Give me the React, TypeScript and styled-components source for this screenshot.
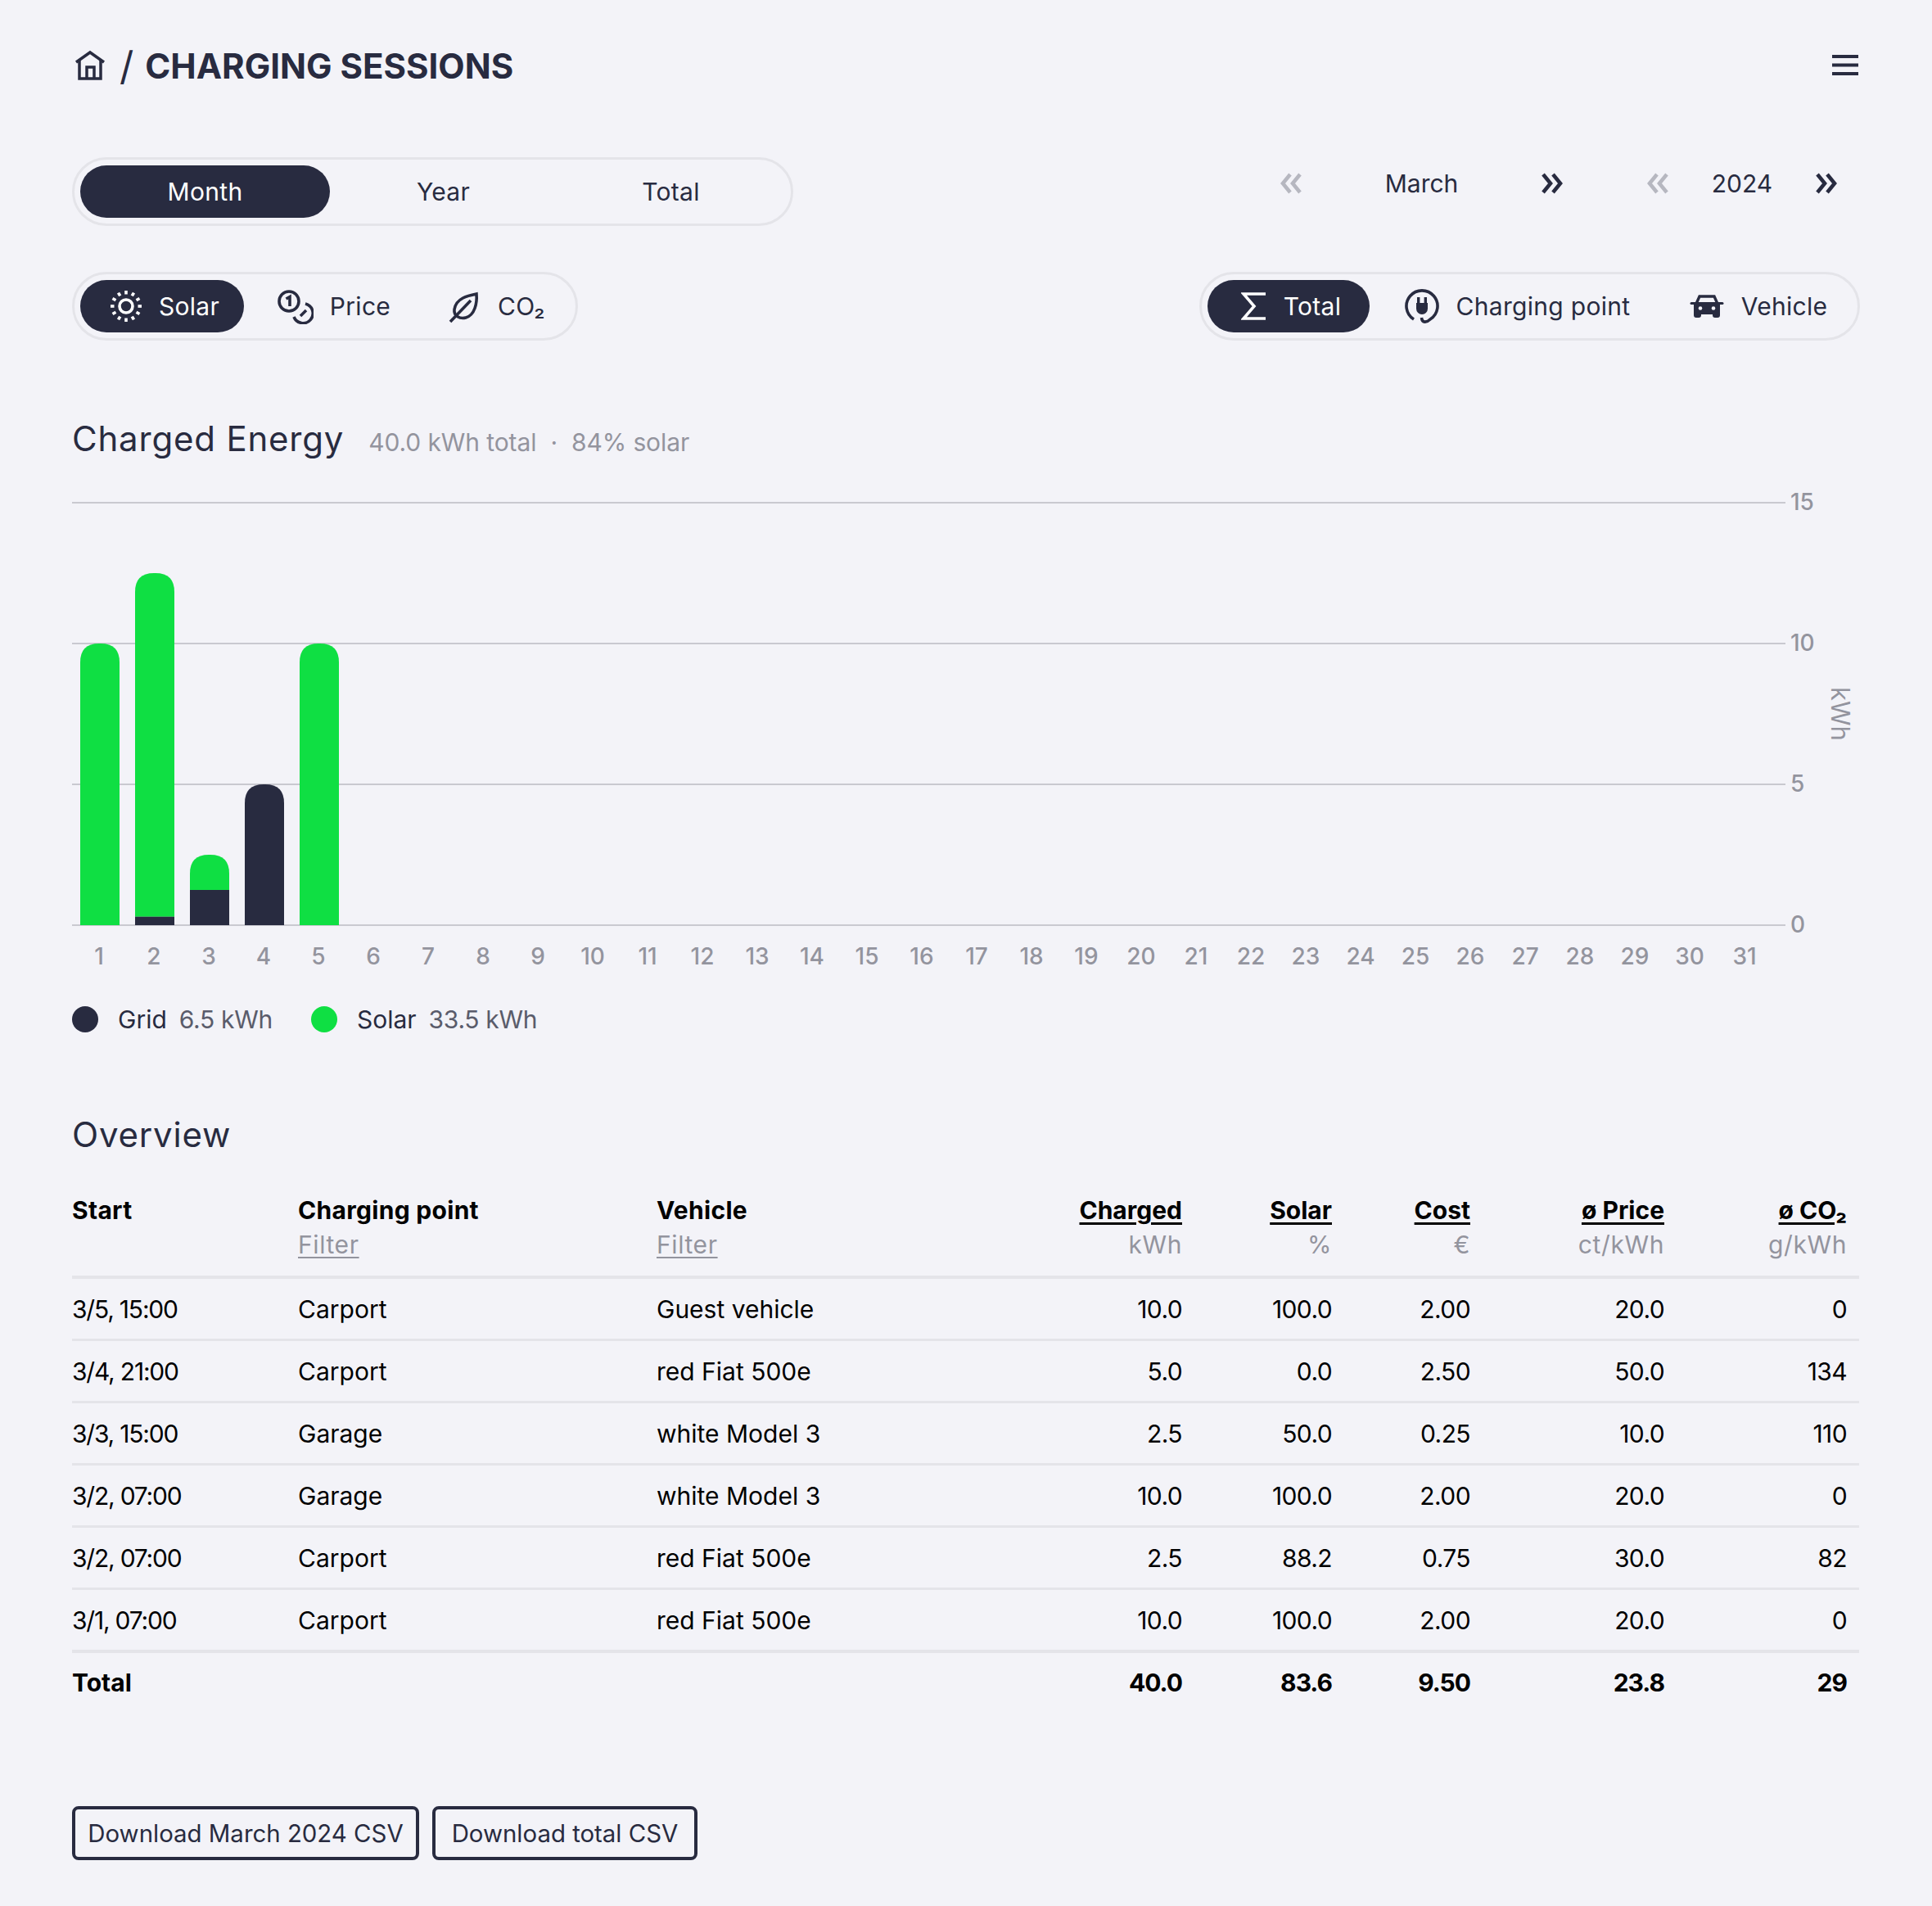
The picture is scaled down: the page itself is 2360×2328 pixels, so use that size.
import React from 'react';
import styled, { createGlobalStyle } from 'styled-components';

const DARK = '#282b40';
const GREEN = '#0fdf43';
const GRAY = '#93949e';
const LINE = '#e4e4e9';
const BG = '#f3f3f8';

const GlobalStyle = createGlobalStyle`
    html, body {
        margin: 0;
        padding: 0;
        background: ${BG};
    }
    body {
        font-family: Inter, "Liberation Sans", sans-serif;
        color: ${DARK};
    }
`

const Page = styled.div`
    width: 2360px;
    height: 2328px;
    box-sizing: border-box;
    padding: 0 88px;
    overflow: hidden;
`

const Header = styled.header`
    height: 160px;
    display: flex;
    align-items: center;
    justify-content: space-between;
`

const Crumbs = styled.div`
    display: flex;
    align-items: center;
`

const Slash = styled.span`
    font-size: 48px;
    font-weight: 400;
    margin: 0 14px 0 16px;
`

const Title = styled.h1`
    margin: 0;
    font-size: 42px;
    font-weight: 700;
    white-space: nowrap;
`

const Row = styled.div<{ $top: number }>`
    display: flex;
    justify-content: space-between;
    align-items: flex-start;
    margin-top: ${(p) => p.$top}px;
`

const Pill = styled.div`
    display: flex;
    box-sizing: border-box;
    height: 84px;
    padding: 7px;
    border: 3px solid ${LINE};
    border-radius: 42px;
`

const Segment = styled.div<{ $width: number; $active?: boolean; $inset?: number }>`
    display: flex;
    align-items: center;
    justify-content: center;
    gap: 20px;
    box-sizing: border-box;
    width: ${(p) => p.$width}px;
    height: 64px;
    padding-left: ${(p) => p.$inset ?? 0}px;
    border-radius: 32px;
    font-size: 30px;
    letter-spacing: 0.3px;
    background: ${(p) => (p.$active ? DARK : 'transparent')};
    color: ${(p) => (p.$active ? '#fff' : DARK)};
    white-space: nowrap;
`

const DateNav = styled.div`
    display: flex;
    align-items: center;
    height: 64px;
    padding-right: 11px;
`

const NavGroup = styled.div`
    display: flex;
    align-items: center;
    & + & {
        margin-left: 69px;
    }
`

const NavArrow = styled.div<{ $disabled?: boolean }>`
    display: flex;
    justify-content: center;
    width: 60px;
    color: ${(p) => (p.$disabled ? '#b6b7c0' : DARK)};
`

const NavLabel = styled.div<{ $width: number }>`
    width: ${(p) => p.$width}px;
    text-align: center;
    font-size: 30px;
`

const ChartHead = styled.div`
    display: flex;
    align-items: baseline;
    gap: 30px;
    height: 50px;
    margin-top: 95px;
`

const Heading = styled.h2`
    margin: 0;
    font-size: 42px;
    line-height: 50px;
    font-weight: 400;
    letter-spacing: 0.8px;
`

const ChartMeta = styled.span`
    display: flex;
    gap: 17px;
    font-size: 30px;
    letter-spacing: -0.1px;
    color: ${GRAY};
`

const ChartFrame = styled.svg`
    display: block;
    margin-top: 33px;
    text {
        font-family: Inter, "Liberation Sans", sans-serif;
        font-size: 28px;
        font-weight: 500;
        fill: ${GRAY};
    }
    text.unit {
        font-size: 31px;
        font-weight: 400;
    }
`

const Legend = styled.div`
    display: flex;
    align-items: center;
    gap: 47px;
    height: 40px;
    margin-top: 35px;
    font-size: 30px;
`

const LegendItem = styled.div`
    display: flex;
    align-items: center;
`

const Dot = styled.span<{ $color: string }>`
    width: 32px;
    height: 32px;
    border-radius: 50%;
    margin-right: 24px;
    background: ${(p) => p.$color};
`

const LegendValue = styled.span`
    margin-left: 15px;
    letter-spacing: -0.3px;
    color: #5a5c6b;
`

const OverviewHeading = styled(Heading)`
    margin-top: 96px;
`

const Table = styled.table`
    width: 2183px;
    margin-top: 46px;
    border-collapse: separate;
    border-spacing: 0;
    table-layout: fixed;
    color: #000;
    font-size: 30px;
`

const Th = styled.th<{ $right?: boolean }>`
    padding: 0 ${(p) => (p.$right ? 15 : 0)}px 17px 0;
    border-bottom: 4px solid ${LINE};
    text-align: ${(p) => (p.$right ? 'right' : 'left')};
    vertical-align: top;
    font-weight: 700;
    letter-spacing: ${(p) => (p.$right ? 0 : 0.3)}px;
`

const ThLabel = styled.div<{ $sort?: boolean }>`
    height: 42px;
    line-height: 42px;
    text-decoration: ${(p) => (p.$sort ? 'underline' : 'none')};
    text-underline-offset: 4px;
    text-decoration-thickness: 3px;
`

const ThSub = styled.div<{ $link?: boolean }>`
    height: 42px;
    line-height: 42px;
    font-weight: 400;
    letter-spacing: 0.6px;
    color: ${GRAY};
    text-decoration: ${(p) => (p.$link ? 'underline' : 'none')};
    text-underline-offset: 4px;
    text-decoration-thickness: 2px;
`

const Td = styled.td<{ $right?: boolean; $last?: boolean }>`
    height: 73px;
    padding: 0 ${(p) => (p.$right ? 15 : 0)}px 0 0;
    border-bottom: ${(p) => (p.$last ? 4 : 3)}px solid ${LINE};
    text-align: ${(p) => (p.$right ? 'right' : 'left')};
    letter-spacing: ${(p) => (p.$right ? -0.6 : 0)}px;
    white-space: nowrap;
    &:first-child {
        letter-spacing: -1.2px;
    }
`

const TotalTd = styled.td<{ $right?: boolean }>`
    height: 72px;
    padding: 0 ${(p) => (p.$right ? 15 : 0)}px 0 0;
    text-align: ${(p) => (p.$right ? 'right' : 'left')};
    letter-spacing: ${(p) => (p.$right ? -1 : 0)}px;
    font-weight: 700;
`

const Actions = styled.div`
    display: flex;
    gap: 16px;
    margin-top: 115px;
`

const DownloadButton = styled.button<{ $width: number }>`
    width: ${(p) => p.$width}px;
    height: 66px;
    padding: 0;
    border: 4px solid ${DARK};
    border-radius: 8px;
    background: transparent;
    color: ${DARK};
    font-family: inherit;
    font-size: 29.4px;
    white-space: nowrap;
`

const HomeIcon = () => (
    <svg width="40" height="40" viewBox="0 0 40 40" fill="none" stroke="currentColor" strokeWidth="3.5" style={{ marginLeft: 2 }}>
        <path d="M3 16 L20 4 L37 16" />
        <path d="M7 14 V36 H33 V14" />
        <path d="M16 36 V22 H25 V36" />
    </svg>
)

const MenuIcon = () => (
    <svg width="32" height="26" viewBox="0 0 32 26" fill={DARK} style={{ marginRight: 2 }}>
        <rect y="0" width="32" height="4" />
        <rect y="10.5" width="32" height="4" />
        <rect y="21" width="32" height="4" />
    </svg>
)

const Chevrons = ({ left }: { left?: boolean }) => (
    <svg width="30" height="28" viewBox="0 0 30 28" fill="none" stroke="currentColor" strokeWidth="4.6">
        <path d={left ? 'M14 3 L5 14 L14 25 M26 3 L17 14 L26 25' : 'M4 3 L13 14 L4 25 M16 3 L25 14 L16 25'} />
    </svg>
)

const SunIcon = () => {
    const rays = Array.from({ length: 12 }, (_, i) => {
        const a = (i * Math.PI) / 6;
        return (
            <line
                key={i}
                x1={20 + 14.5 * Math.cos(a)}
                y1={20 + 14.5 * Math.sin(a)}
                x2={20 + 19 * Math.cos(a)}
                y2={20 + 19 * Math.sin(a)}
            />
        );
    });
    return (
        <svg width="40" height="40" viewBox="0 0 40 40" fill="none" stroke="currentColor" strokeWidth="3.6">
            <circle cx="20" cy="20" r="8" />
            {rays}
        </svg>
    );
}

const CoinsIcon = () => (
    <svg width="48" height="44" viewBox="0 0 48 44" fill="none" stroke="currentColor" strokeWidth="3.6">
        <circle cx="18" cy="16" r="12" />
        <path d="M14.5 13 L19 10.5 V22" />
        <path d="M38 19 A12 12 0 1 1 24 35" />
        <path d="M32 34 L39 27" />
    </svg>
)

const LeafIcon = () => (
    <svg width="44" height="44" viewBox="0 0 44 44" fill="none" stroke="currentColor" strokeWidth="3.6">
        <path d="M38 7 C28 9 13 12 11 26 C10 34 18 38 25 36 C36 33 39 18 38 7 Z" />
        <path d="M6 41 L31 15" />
    </svg>
)

const SigmaIcon = () => (
    <svg width="32" height="36" viewBox="0 0 32 36" fill="none" stroke="currentColor" strokeWidth="3.6">
        <path d="M30 3 H3 L16 18 L3 33 H30" />
    </svg>
)

const PlugIcon = () => (
    <svg width="44" height="44" viewBox="0 0 44 44" fill="none" stroke="currentColor" strokeWidth="3.6">
        <path d="M12 38 A19 19 0 1 1 32 38 C28 42 22 43 21.5 36" />
        <path fill="currentColor" stroke="none" d="M16 11 h3.4 v7 h5.2 v-7 h3.4 v7 h1 v7 a7 7 0 0 1 -14 0 v-7 h1 Z" />
    </svg>
)

const CarIcon = () => (
    <svg width="44" height="32" viewBox="0 0 44 32" fill="none">
        <path stroke="currentColor" strokeWidth="3.4" d="M9 13 L13 4 H31 L35 13" />
        <path stroke="currentColor" strokeWidth="3" strokeLinecap="round" d="M3 12.5 H41" />
        <path fill="currentColor" d="M6 12 H38 V27 a3 3 0 0 1 -3 3 h-3 a3 3 0 0 1 -3 -3 V26 H15 v1 a3 3 0 0 1 -3 3 H9 a3 3 0 0 1 -3 -3 Z" />
        <circle cx="14" cy="18.5" r="2.3" fill={BG} />
        <circle cx="30" cy="18.5" r="2.3" fill={BG} />
    </svg>
)

// y position of a kWh value inside the chart svg
const yOf = (kwh: number): number => 536 - kwh * 34.4;

const bars = [
    { grid: 0, solar: 10 },
    { grid: 0.3, solar: 12.2 },
    { grid: 1.25, solar: 1.25 },
    { grid: 5, solar: 0 },
    { grid: 0, solar: 10 },
];

const roundedTop = (x: number, top: number, bottom: number): string => {
    const w = 48;
    const r = 23;
    return `M${x} ${bottom} V${top + r} Q${x} ${top} ${x + r} ${top} H${x + w - r} Q${x + w} ${top} ${x + w} ${top + r} V${bottom} Z`;
}

const EnergyChart = () => (
    <ChartFrame width="2184" height="596" viewBox="0 0 2184 596">
        {[15, 10, 5, 0].map((v) => (
            <g key={v}>
                <line x1="0" x2="2093" y1={yOf(v)} y2={yOf(v)} stroke="#c9c9d0" strokeWidth="2" />
                <text x="2099" y={yOf(v) + 9}>{v}</text>
            </g>
        ))}
        {bars.map((b, i) => {
            const x = 10 + i * 67;
            const total = b.grid + b.solar;
            return (
                <g key={i}>
                    {b.solar > 0 && <path d={roundedTop(x, yOf(total), yOf(b.grid))} fill={GREEN} />}
                    {b.grid > 0 && b.solar > 0 && <rect x={x} y={yOf(b.grid)} width="48" height={yOf(0) - yOf(b.grid)} fill={DARK} />}
                    {b.grid > 0 && b.solar === 0 && <path d={roundedTop(x, yOf(total), yOf(0))} fill={DARK} />}
                </g>
            );
        })}
        {Array.from({ length: 31 }, (_, i) => (
            <text key={i} x={33 + i * 67} y="584" textAnchor="middle">{i + 1}</text>
        ))}
        <text className="unit" x="2158" y="278" textAnchor="middle" transform="rotate(90 2158 278)" dy="9">kWh</text>
    </ChartFrame>
)

const columns = [276, 438, 448, 209, 183, 169, 237, 223];

const heads = [
    { label: 'Charged', unit: 'kWh' },
    { label: 'Solar', unit: '%' },
    { label: 'Cost', unit: '€' },
    { label: 'ø Price', unit: 'ct/kWh' },
    { label: 'ø CO₂', unit: 'g/kWh' },
];

const sessions = [
    ['3/5, 15:00', 'Carport', 'Guest vehicle', '10.0', '100.0', '2.00', '20.0', '0'],
    ['3/4, 21:00', 'Carport', 'red Fiat 500e', '5.0', '0.0', '2.50', '50.0', '134'],
    ['3/3, 15:00', 'Garage', 'white Model 3', '2.5', '50.0', '0.25', '10.0', '110'],
    ['3/2, 07:00', 'Garage', 'white Model 3', '10.0', '100.0', '2.00', '20.0', '0'],
    ['3/2, 07:00', 'Carport', 'red Fiat 500e', '2.5', '88.2', '0.75', '30.0', '82'],
    ['3/1, 07:00', 'Carport', 'red Fiat 500e', '10.0', '100.0', '2.00', '20.0', '0'],
];

const totals = ['40.0', '83.6', '9.50', '23.8', '29'];

export default function App() {
    return (
        <Page>
            <GlobalStyle />
            <Header>
                <Crumbs>
                    <HomeIcon />
                    <Slash>/</Slash>
                    <Title>CHARGING SESSIONS</Title>
                </Crumbs>
                <MenuIcon />
            </Header>

            <Row $top={32}>
                <Pill>
                    <Segment $width={305} $active>Month</Segment>
                    <Segment $width={277}>Year</Segment>
                    <Segment $width={279}>Total</Segment>
                </Pill>
                <DateNav>
                    <NavGroup>
                        <NavArrow $disabled><Chevrons left /></NavArrow>
                        <NavLabel $width={259}>March</NavLabel>
                        <NavArrow><Chevrons /></NavArrow>
                    </NavGroup>
                    <NavGroup>
                        <NavArrow $disabled><Chevrons left /></NavArrow>
                        <NavLabel $width={146}>2024</NavLabel>
                        <NavArrow><Chevrons /></NavArrow>
                    </NavGroup>
                </DateNav>
            </Row>

            <Row $top={56}>
                <Pill>
                    <Segment $width={200} $active $inset={6}><SunIcon />Solar</Segment>
                    <Segment $width={216}><CoinsIcon />Price</Segment>
                    <Segment $width={182}><LeafIcon />CO₂</Segment>
                </Pill>
                <Pill>
                    <Segment $width={198} $active $inset={6}><SigmaIcon />Total</Segment>
                    <Segment $width={360}><PlugIcon />Charging point</Segment>
                    <Segment $width={229}><CarIcon />Vehicle</Segment>
                </Pill>
            </Row>

            <ChartHead>
                <Heading>Charged Energy</Heading>
                <ChartMeta>
                    <span>40.0 kWh total</span>
                    <span>·</span>
                    <span>84% solar</span>
                </ChartMeta>
            </ChartHead>

            <EnergyChart />

            <Legend>
                <LegendItem>
                    <Dot $color={DARK} />
                    Grid
                    <LegendValue>6.5 kWh</LegendValue>
                </LegendItem>
                <LegendItem>
                    <Dot $color={GREEN} />
                    Solar
                    <LegendValue>33.5 kWh</LegendValue>
                </LegendItem>
            </Legend>

            <OverviewHeading>Overview</OverviewHeading>

            <Table>
                <colgroup>
                    {columns.map((w, i) => <col key={i} width={w} />)}
                </colgroup>
                <thead>
                    <tr>
                        <Th>
                            <ThLabel>Start</ThLabel>
                            <ThSub>&nbsp;</ThSub>
                        </Th>
                        <Th>
                            <ThLabel>Charging point</ThLabel>
                            <ThSub $link>Filter</ThSub>
                        </Th>
                        <Th>
                            <ThLabel>Vehicle</ThLabel>
                            <ThSub $link>Filter</ThSub>
                        </Th>
                        {heads.map((h) => (
                            <Th key={h.label} $right>
                                <ThLabel $sort>{h.label}</ThLabel>
                                <ThSub>{h.unit}</ThSub>
                            </Th>
                        ))}
                    </tr>
                </thead>
                <tbody>
                    {sessions.map((s, r) => (
                        <tr key={r}>
                            {s.map((cell, c) => (
                                <Td key={c} $right={c > 2} $last={r === sessions.length - 1}>{cell}</Td>
                            ))}
                        </tr>
                    ))}
                    <tr>
                        <TotalTd colSpan={3}>Total</TotalTd>
                        {totals.map((t, i) => <TotalTd key={i} $right>{t}</TotalTd>)}
                    </tr>
                </tbody>
            </Table>

            <Actions>
                <DownloadButton $width={424}>Download March 2024 CSV</DownloadButton>
                <DownloadButton $width={324}>Download total CSV</DownloadButton>
            </Actions>
        </Page>
    );
}
